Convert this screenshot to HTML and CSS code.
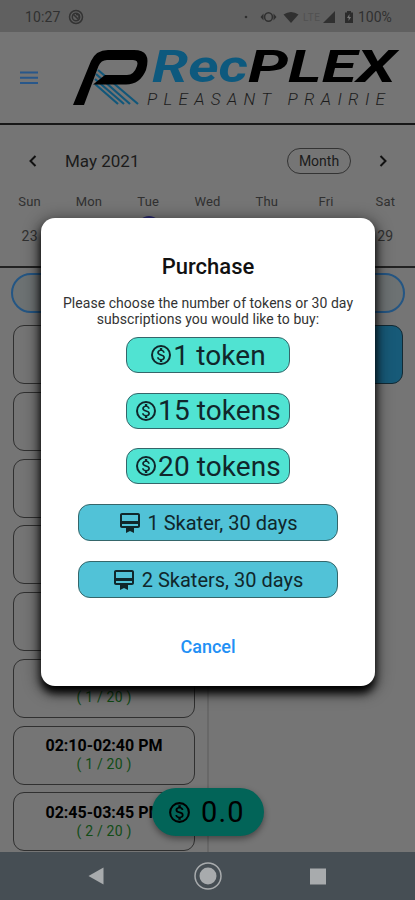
FILE: index.html
```html
<!DOCTYPE html>
<html lang="en">
<head>
<meta charset="utf-8">
<title>RecPLEX</title>
<link rel="stylesheet" href="styles.css">
</head>
<body>
<svg class="defs" aria-hidden="true">
  <symbol id="coin" viewBox="0 0 24 24"><path d="M12 2a10 10 0 1 0 0 20 10 10 0 0 0 0-20zm0 18a8 8 0 1 1 0-16 8 8 0 0 1 0 16zm.31-8.86c-1.77-.45-2.34-.94-2.34-1.67 0-.84.79-1.43 2.1-1.43 1.38 0 1.9.66 1.94 1.64h1.71c-.05-1.34-.87-2.57-2.49-2.97V5H10.9v1.69c-1.51.32-2.72 1.3-2.72 2.81 0 1.79 1.49 2.69 3.66 3.21 1.95.46 2.34 1.15 2.34 1.87 0 .53-.39 1.39-2.1 1.39-1.6 0-2.23-.72-2.32-1.64H8.04c.1 1.7 1.36 2.66 2.86 2.97V19h2.34v-1.67c1.52-.29 2.72-1.16 2.73-2.77-.01-2.2-1.9-2.96-3.66-3.42z"/></symbol>
  <symbol id="member" viewBox="0 0 24 24"><path d="M20 2H4c-1.11 0-2 .89-2 2v11c0 1.11.89 2 2 2h4v5l4-2 4 2v-5h4c1.11 0 2-.89 2-2V4c0-1.11-.89-2-2-2zm0 13H4v-2h16v2zm0-5H4V4h16v6z"/></symbol>
</svg>
<div class="screen">
  <header class="status">
    <span class="time">10:27</span>
    <svg class="app-icon" viewBox="0 0 16 16"><circle cx="8" cy="8" r="6.5"/><circle cx="8" cy="8" r="3.7"/><path d="M5 5l6 6M8 5.500l3 .5v3"/></svg>
    <svg class="indicators" viewBox="0 0 96 16">
      <circle cx="3" cy="8" r="1.300"/>
      <path d="M20.500 4.500L17.500 8l3 3.500zM30.500 4.500l3 3.500-3 3.500z"/><ellipse class="line" cx="25.500" cy="8" rx="3.900" ry="4.300"/>
      <path d="M40.500 5.500Q48 .5 55.500 5.500L48 14z"/>
      <text class="lte" x="60" y="12" textLength="17">LTE</text>
      <path d="M92 2v12H80z"/>
    </svg>
    <svg class="battery" viewBox="0 0 10 14"><path d="M3 1h4v1.500h2V13H1V2.500h2z"/><path class="bolt" d="M5.500 4L3 8h1.700L4.500 11 7 7H5.300z"/></svg>
    <span class="percent">100%</span>
  </header>
  <div class="brand">
    <svg class="menu" viewBox="0 0 18 14"><path d="M0 1.500h18M0 6.700h18M0 12h18"/></svg>
    <svg class="logo" viewBox="0 0 330 62">
      <path class="rays" d="M25 20l40 34M23 24l34 30M22 29l29 25M22 34l23 20"/>
      <path class="mark" d="M0 55H11L25.500 16Q28 10 34 10H60Q66 10 64 16Q61 25 54 25H32L20 34.500H53Q67 34.500 73 20Q79 0 61 0H35Q23 0 18 11Z"/>
      <text class="rec" x="79" y="31.500" textLength="96" lengthAdjust="spacingAndGlyphs">Rec</text>
      <text class="plex" x="175" y="31.500" textLength="148" lengthAdjust="spacingAndGlyphs">PLEX</text>
      <text class="town" x="74" y="55" textLength="238" lengthAdjust="spacing">PLEASANT PRAIRIE</text>
    </svg>
  </div>
  <section class="calendar">
    <div class="month-row">
      <svg class="chev" viewBox="0 0 8 12"><path d="M6.500 1L1.500 6l5 5"/></svg>
      <span class="month">May 2021</span>
      <span class="view">Month</span>
      <svg class="chev" viewBox="0 0 8 12"><path d="M1.500 1l5 5-5 5"/></svg>
    </div>
    <div class="week"><span>Sun</span><span>Mon</span><span>Tue</span><span>Wed</span><span>Thu</span><span>Fri</span><span>Sat</span></div>
    <div class="week dates"><span>23</span><span>24</span><span class="today">25</span><span>26</span><span>27</span><span>28</span><span>29</span></div>
  </section>
  <main class="schedule">
    <div class="search"></div>
    <div class="columns">
      <div class="slots">
        <div class="slot"></div><div class="slot"></div><div class="slot"></div><div class="slot"></div><div class="slot"></div>
        <div class="slot"><b>&nbsp;</b><span>( 1 / 20 )</span></div>
        <div class="slot"><b>02:10-02:40 PM</b><span>( 1 / 20 )</span></div>
        <div class="slot"><b>02:45-03:45 PM</b><span>( 2 / 20 )</span></div>
      </div>
      <div class="booked"><div class="slot blue"></div></div>
    </div>
  </main>
  <nav class="nav">
    <svg viewBox="0 0 30 30"><path d="M6.500 15L21.500 6.500v17z"/></svg>
    <svg viewBox="0 0 30 30"><circle class="ring" cx="15" cy="15" r="13"/><circle cx="15" cy="15" r="8.500"/></svg>
    <svg viewBox="0 0 30 30"><path d="M7 7.500h16v16H7z"/></svg>
  </nav>
  <div class="balance"><svg><use href="#coin"/></svg><span>0.0</span></div>
  <div class="dialog">
    <h1>Purchase</h1>
    <p>Please choose the number of tokens or 30 day<br>subscriptions you would like to buy:</p>
    <div class="btn token"><svg><use href="#coin"/></svg>1 token</div>
    <div class="btn token"><svg><use href="#coin"/></svg>15 tokens</div>
    <div class="btn token"><svg><use href="#coin"/></svg>20 tokens</div>
    <div class="btn sub"><svg><use href="#member"/></svg>1 Skater, 30 days</div>
    <div class="btn sub"><svg><use href="#member"/></svg>2 Skaters, 30 days</div>
    <div class="cancel">Cancel</div>
  </div>
</div>
</body>
</html>
```
FILE: styles.css
```css
* { box-sizing: border-box; }
body { margin: 0; font-family: Roboto, sans-serif; }
.defs { display: none; }
.screen { position: relative; width: 415px; height: 900px; overflow: hidden; display: flex; flex-direction: column; background: #757575; color: #1b1b1b; }

.status { height: 32px; flex: none; display: flex; align-items: center; background: #606060; color: #303030; padding: 1px 22px 0 25px; font-size: 14px; }
.time { width: 35px; letter-spacing: .1px; }
.app-icon { width: 16px; height: 16px; margin-left: 8px; fill: none; stroke: #333; stroke-width: 1.500; }
.indicators { width: 96px; height: 16px; margin-left: auto; fill: #303030; }
.line { fill: none; stroke: #303030; stroke-width: 1.500; }
.lte { font-size: 10px; fill: #515151; }
.battery { width: 10px; height: 14px; margin: 0 4px 0 5px; fill: #2c2c2c; }
.bolt { fill: #777; }
.percent { width: 35px; white-space: nowrap; }

.brand { height: 93px; flex: none; display: flex; align-items: flex-start; border-bottom: 2px solid #171717; padding-left: 20px; }
.menu { width: 18px; height: 14px; margin-top: 39px; stroke: #28578a; stroke-width: 2; }
.logo { width: 330px; height: 62px; margin: 18px 0 0 35px; overflow: visible; }
.mark { fill: #000; }
.rays { fill: none; stroke: #11577a; stroke-width: 2.200; }
.rec, .plex { font: italic 700 43.500px Roboto, sans-serif; }
.rec { fill: #0d597e; }
.plex { fill: #000; }
.town { font: italic 300 17px Roboto, sans-serif; fill: #1c1c1c; }

.calendar { height: 143px; flex: none; border-bottom: 2px solid #222; }
.month-row { height: 72px; padding: 0 28px 0 29px; display: flex; align-items: center; }
.chev { width: 8px; height: 12px; fill: none; stroke: #111; stroke-width: 2; }
.month { margin: 0 auto 0 28px; font-size: 17px; }
.view { width: 64px; height: 26px; margin-right: 28px; border: 1px solid #333; border-radius: 13px; font-size: 14px; line-height: 24px; text-align: center; }
.week { display: grid; grid-template-columns: repeat(7, 1fr); text-align: center; font-size: 13px; line-height: 15px; color: #303030; margin-top: -3px; height: 17px; letter-spacing: .2px; }
.week.dates { margin-top: 18px; font-size: 14px; }
.today { position: relative; }
.today::before { content: ""; position: absolute; left: 18px; top: -13px; width: 24px; height: 24px; border-radius: 50%; background: #28286c; }

.schedule { flex: 1; min-height: 0; display: flex; flex-direction: column; padding-top: 5px; }
.search { height: 40px; flex: none; margin: 0 10px 0 11px; border: 2px solid #245684; border-radius: 20px; background: #6d7273; }
.columns { flex: 1; min-height: 0; display: grid; grid-template-columns: 209px 1fr; margin-top: 5px; }
.slots { border-right: 2px solid #686868; padding: 7px 12px 0 13px; display: flex; flex-direction: column; gap: 7.750px; }
.booked { padding: 7px 12px 0 12px; }
.slot { height: 59px; flex: none; border: 1px solid #303030; border-radius: 11px; display: flex; flex-direction: column; align-items: center; justify-content: center; font-size: 16px; line-height: 18px; color: #000; }
.slot span { color: #114c15; font-size: 14px; letter-spacing: .2px; }
.slot b { font-weight: 700; }
.blue { background: #175a78; border-color: #132a34; }

.nav { height: 48px; flex: none; background: #464e54; display: flex; align-items: center; justify-content: space-between; padding: 0 82px; }
.nav svg { width: 30px; height: 30px; fill: #a8abad; }
.nav .ring { fill: none; stroke: #a8abad; stroke-width: 1.500; }

.balance { position: absolute; left: 152px; top: 788px; width: 112px; height: 48px; border-radius: 24px; background: #026458; box-shadow: 0 3px 6px rgba(0,0,0,.4); display: flex; align-items: center; padding-left: 15px; font-size: 29px; color: #000; letter-spacing: 1.100px; gap: 9px; }
.balance svg { width: 25px; height: 25px; }

.dialog { position: absolute; left: 41px; top: 218px; width: 334px; height: 468px; border-radius: 14px; background: #fff; color: #111; box-shadow: 0 7px 9px 0 #000, 0 4px 16px 3px rgba(0,0,0,.45); display: flex; flex-direction: column; align-items: center; }
.dialog h1 { margin: 36px 0 0; font-size: 22px; line-height: 26px; font-weight: 500; }
.dialog p { margin: 15px 0 10px; font-size: 14px; line-height: 16px; letter-spacing: .05px; text-align: center; color: #333; white-space: nowrap; }
.btn { flex: none; border: 1px solid #35666a; display: flex; align-items: center; justify-content: center; white-space: nowrap; color: #10272b; fill: #10272b; }
.btn svg { width: 24px; height: 24px; margin-left: -1px; }
.token { width: 164px; height: 36px; border-radius: 12px; background: #50e3d2; font-size: 28px; letter-spacing: .1px; margin-bottom: 19.500px; }
.sub { width: 260px; height: 37px; border-radius: 12px; background: #51c2d7; font-size: 20px; gap: 6px; padding-top: 1px; margin-bottom: 20px; }
.cancel { margin-top: 18px; font-size: 18px; line-height: 22px; font-weight: 500; color: #2290f5; }
```
